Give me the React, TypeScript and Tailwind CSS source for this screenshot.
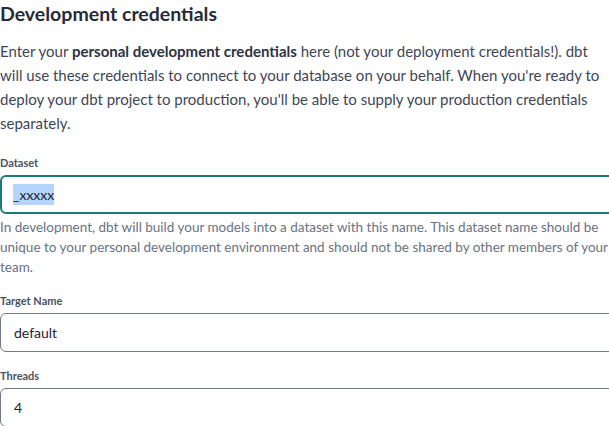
function Label({ children }: { children: React.ReactNode }) {
  return <div className="text-[11px] leading-[16px] font-bold text-[#4b5261] mb-1">{children}</div>;
}

export default function App() {
  return (
    <div className="w-[609px] h-[426px] overflow-hidden bg-white" style={{ fontFamily: "Lato, 'Noto Sans', sans-serif" }}>
      <div className="w-[640px]">
        <h2 className="text-[19.5px] leading-[28px] font-bold text-[#262b38]">Development credentials</h2>
        <p className="mt-[11px] text-[15px] leading-[24px] text-[#3f4656] whitespace-nowrap">
          Enter your <span className="font-bold text-[#2d3342]">personal development credentials</span> here (not your deployment credentials!). dbt
          <br />
          will use these credentials to connect to your database on your behalf. When you're ready to
          <br />
          deploy your dbt project to production, you'll be able to supply your production credentials
          <br />
          separately.
        </p>

        <div className="mt-5">
          <Label>Dataset</Label>
          <div className="h-[39px] rounded-md border-2 border-[#1b7a78] flex items-center pl-[11px] text-[14px] text-[#1f2430]">
            <span className="bg-[#b4d5fe] leading-[21px] inline-block">_xxxxx</span>
          </div>
          <p className="mt-[3px] text-[13.5px] leading-[20px] text-[#6b7282] whitespace-nowrap">
            In development, dbt will build your models into a dataset with this name. This dataset name should be
            <br />
            unique to your personal development environment and should not be shared by other members of your
            <br />
            team.
          </p>
        </div>

        <div className="mt-4">
          <Label>Target Name</Label>
          <div className="h-[39px] rounded-md border border-[#727885] flex items-center pl-[13px] text-[14px] text-[#1f2430]">
            default
          </div>
        </div>

        <div className="mt-4">
          <Label>Threads</Label>
          <div className="h-[39px] rounded-md border border-[#727885] flex items-center pl-[13px] text-[14px] text-[#1f2430]">
            4
          </div>
        </div>
      </div>
    </div>
  );
}
